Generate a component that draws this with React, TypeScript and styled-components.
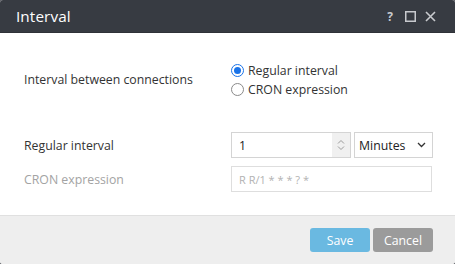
import React from 'react'
import styled, { createGlobalStyle } from 'styled-components'

const GlobalStyle = createGlobalStyle`
  html, body {
    margin: 0;
    padding: 0;
    background: #5a5d63;
  }
  body {
    font-family: "Open Sans", "Noto Sans", sans-serif;
  }
`

const Dialog = styled.div`
  width: 455px;
  height: 264px;
  display: flex;
  flex-direction: column;
  border-radius: 3px;
  overflow: hidden;
  background: #fff;
`

const TitleBar = styled.header`
  height: 33px;
  background: #373b42;
  display: flex;
  align-items: center;
  justify-content: space-between;
  padding: 0 19px 0 16px;
  box-sizing: border-box;
  border-bottom: 1px solid #2f3238;
`

const Title = styled.h1`
  margin: 0;
  font-size: 15.3px;
  font-weight: 400;
  color: #fff;
  letter-spacing: 0.1px;
`

const TitleTools = styled.div`
  display: flex;
  align-items: center;
  gap: 8px;
  color: #c8cace;
`

const ToolButton = styled.span`
  width: 12px;
  height: 12px;
  display: flex;
  align-items: center;
  justify-content: center;
  font-size: 12px;
  font-weight: 700;
`

const Body = styled.main`
  flex: 1;
  padding: 29px 24px 0 24px;
  display: flex;
  flex-direction: column;
`

const Row = styled.div<{ $gap?: number }>`
  display: grid;
  grid-template-columns: 207px 1fr;
  align-items: center;
  margin-bottom: ${p => p.$gap ?? 8}px;
`

const Label = styled.label<{ $muted?: boolean }>`
  font-size: 12.3px;
  color: ${p => (p.$muted ? '#a3a3a3' : '#333')};
`

const RadioGroup = styled.div`
  display: flex;
  flex-direction: column;
  gap: 3px;
`

const RadioOption = styled.label`
  display: flex;
  align-items: center;
  gap: 4px;
  font-size: 12.3px;
  color: #333;
  height: 16px;
`

const RadioDot = styled.span<{ $checked?: boolean }>`
  width: 11px;
  height: 11px;
  border-radius: 50%;
  border: 1px solid ${p => (p.$checked ? '#1a73e8' : '#8a8a8a')};
  display: flex;
  align-items: center;
  justify-content: center;
  flex-shrink: 0;
  &::after {
    content: '';
    width: 7px;
    height: 7px;
    border-radius: 50%;
    background: ${p => (p.$checked ? '#1a73e8' : 'transparent')};
  }
`

const Controls = styled.div`
  display: flex;
  gap: 3px;
`

const NumberBox = styled.div`
  width: 120px;
  height: 26px;
  box-sizing: border-box;
  border: 1px solid #d4d4d4;
  display: flex;
  align-items: center;
  padding-left: 7px;
  font-size: 12.3px;
  color: #222;
`

const NumberValue = styled.span`
  flex: 1;
`

const Spinner = styled.span`
  width: 18px;
  height: 24px;
  background: #f0f0f0;
  display: flex;
  align-items: center;
  justify-content: center;
`

const SelectBox = styled.div`
  width: 79px;
  height: 26px;
  box-sizing: border-box;
  border: 1px solid #d4d4d4;
  display: flex;
  align-items: center;
  justify-content: space-between;
  padding: 0 6px 0 4px;
  font-size: 12.3px;
  color: #222;
`

const TextBox = styled.div`
  width: 201px;
  height: 26px;
  box-sizing: border-box;
  border: 1px solid #dedede;
  display: flex;
  align-items: center;
  padding-left: 7px;
  font-size: 11px;
  color: #b2b2b2;
`

const Footer = styled.footer`
  height: 49px;
  background: #eeeeee;
  border-top: 1px solid #e0e0e0;
  box-sizing: border-box;
  display: flex;
  justify-content: flex-end;
  align-items: center;
  gap: 3px;
  padding: 0 22px 0 0;
`

const Button = styled.button<{ $primary?: boolean }>`
  width: 60px;
  height: 24px;
  border: none;
  border-radius: 3px;
  font-family: inherit;
  font-size: 12.3px;
  color: #fff;
  background: ${p => (p.$primary ? '#6ab9e1' : '#9b9b9b')};
  padding: 0;
`

export default function App() {
  return (
    <>
      <GlobalStyle />
      <Dialog>
        <TitleBar>
          <Title>Interval</Title>
          <TitleTools>
            <ToolButton>?</ToolButton>
            <ToolButton>
              <svg width="11" height="11" viewBox="0 0 11 11">
                <rect x="0.75" y="0.75" width="9.5" height="9.5" fill="none" stroke="currentColor" strokeWidth="1.5" />
              </svg>
            </ToolButton>
            <ToolButton>
              <svg width="11" height="11" viewBox="0 0 11 11">
                <path d="M1 1L10 10M10 1L1 10" stroke="currentColor" strokeWidth="1.6" />
              </svg>
            </ToolButton>
          </TitleTools>
        </TitleBar>
        <Body>
          <Row $gap={35}>
            <Label>Interval between connections</Label>
            <RadioGroup>
              <RadioOption>
                <RadioDot $checked />
                Regular interval
              </RadioOption>
              <RadioOption>
                <RadioDot />
                CRON expression
              </RadioOption>
            </RadioGroup>
          </Row>
          <Row>
            <Label>Regular interval</Label>
            <Controls>
              <NumberBox>
                <NumberValue>1</NumberValue>
                <Spinner>
                  <svg width="8" height="12" viewBox="0 0 8 12">
                    <path d="M1 4.5L4 1.5L7 4.5M1 7.5L4 10.5L7 7.5" fill="none" stroke="#9a9a9a" strokeWidth="1" />
                  </svg>
                </Spinner>
              </NumberBox>
              <SelectBox>
                Minutes
                <svg width="9" height="6" viewBox="0 0 9 6">
                  <path d="M1 1L4.5 4.5L8 1" fill="none" stroke="#333" strokeWidth="1.3" />
                </svg>
              </SelectBox>
            </Controls>
          </Row>
          <Row>
            <Label $muted>CRON expression</Label>
            <TextBox>R R/1 * * * ? *</TextBox>
          </Row>
        </Body>
        <Footer>
          <Button $primary>Save</Button>
          <Button>Cancel</Button>
        </Footer>
      </Dialog>
    </>
  )
}
